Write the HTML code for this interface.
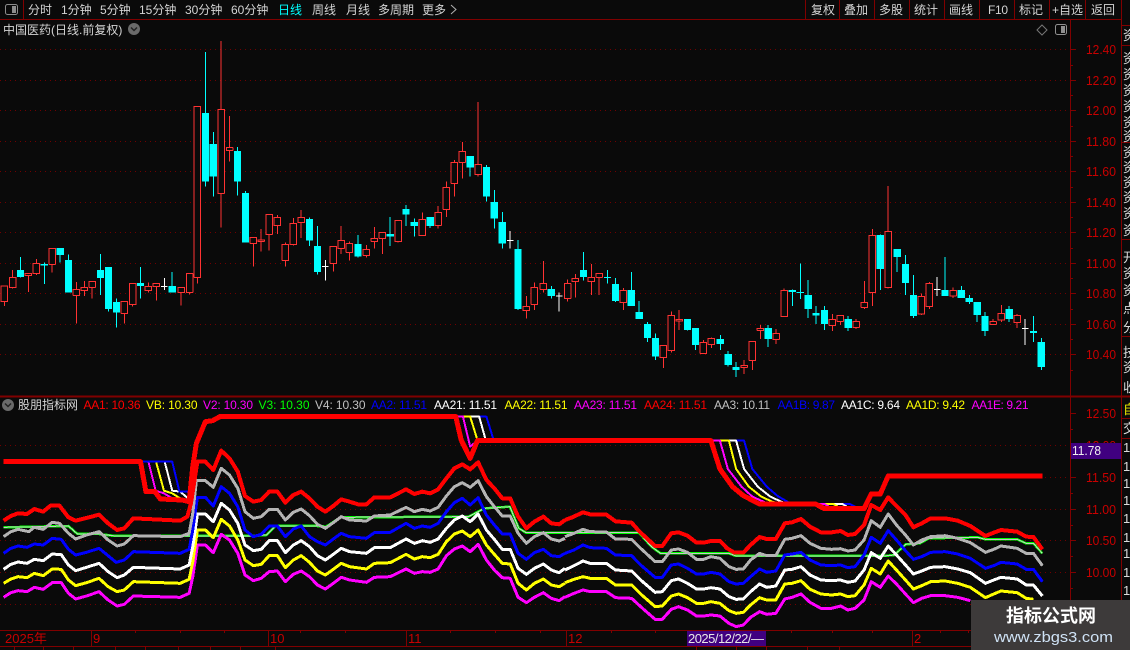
<!DOCTYPE html>
<html><head><meta charset="utf-8"><style>
html,body{margin:0;padding:0;width:1130px;height:650px;overflow:hidden;background:#0a0a0a}
svg{display:block}
text{font-family:"Liberation Sans","WenQuanYi Zen Hei","Noto Sans CJK SC",sans-serif;font-size:12px}
.t{fill:#d4d4d4}
.ax{fill:#c80000;font-size:13px}
.n{vector-effect:non-scaling-stroke;fill:none;shape-rendering:crispEdges;stroke-linejoin:round}
.s{fill:#dcdcdc;font-size:13px}
</style></head><body>
<svg width="1130" height="650" viewBox="0 0 1130 650" xmlns="http://www.w3.org/2000/svg">
<rect width="1130" height="650" fill="#0a0a0a"/>

<!-- grids -->
<g stroke="#700000" stroke-width="1" stroke-dasharray="1 4" shape-rendering="crispEdges">
<path d="M0 49.5H1068M0 80.5H1068M0 110.5H1068M0 141.5H1068M0 171.5H1068M0 202.5H1068M0 232.5H1068M0 263.5H1068M0 293.5H1068M0 324.5H1068M0 354.5H1068"/>
<path d="M0 445.5H1068M0 477.5H1068M0 509.5H1068M0 540.5H1068M0 572.5H1068M0 604.5H1068"/>
</g>

<!-- candles left half -->
<g transform="scale(.3603,.33333)">
<path class="n" stroke="#ff3232" stroke-width="1" d="M12 858V918M35 810V866M79 820V876M101 777V825M145 745V818M212 846V971M234 843V888M256 843V896M345 903V971M368 850V920M412 847V878M434 850V902M503 862V917M526 820V884M548 319V851M614 123V683M637 348V485M703 712V800M725 687V755M747 643V752M770 645V702M792 727V800M814 654V736M836 630V714M925 738V815M947 678V762M970 724V782M1017 735V773M1039 681V746M1061 697V762M1105 660V728M1172 637V708M1216 618V686M1239 544V651M1261 480V590M1283 426V536M1327 306V530M1461 888V956M1483 847V930M1508 783V878"/>
<path class="n" stroke="#ff3232" stroke-width="1" style="fill:#0a0a0a" d="M3 858h18v47h-18zM26 832h18v31h-18zM70 820h18v7h-18zM92 790h18v31h-18zM136 745h18v48h-18zM203 868h18v18h-18zM225 862h18v10h-18zM247 844h18v18h-18zM336 904h18v36h-18zM359 850h18v64h-18zM403 859h18v13h-18zM425 850h18v10h-18zM494 862h18v16h-18zM517 820h18v58h-18zM539 319h18v513h-18zM605 328h18v252h-18zM628 442h18v10h-18zM694 712h18v18h-18zM716 720h18v4h-18zM738 643h18v60h-18zM761 652h18v25h-18zM783 733h18v48h-18zM805 670h18v64h-18zM827 652h18v16h-18zM916 739h18v51h-18zM938 721h18v24h-18zM961 730h18v28h-18zM1008 748h18v18h-18zM1030 715h18v9h-18zM1052 697h18v18h-18zM1096 661h18v64h-18zM1163 658h18v49h-18zM1207 637h18v39h-18zM1230 562h18v66h-18zM1252 487h18v63h-18zM1274 454h18v33h-18zM1318 493h18v31h-18zM1452 919h18v13h-18zM1474 862h18v51h-18zM1499 850h18v18h-18z"/>
<path class="n" stroke="#00ffff" stroke-width="1" d="M57 771V833M123 788V852M167 744V788M190 763V878M279 762V885M301 801V935M323 895V983M390 801V896M478 816V878M570 156V560M592 396V590M659 441V587M681 573V728M859 652V738M881 678V824M994 705V773M1083 651V738M1127 615V678M1150 656V710M1194 651V684M1305 468V530M1350 495V605M1372 570V686M1394 636V746M1438 720V930M1530 858V896"/>
<path fill="#00ffff" shape-rendering="crispEdges" d="M47 810h20v21h-20zM113 792h20v5h-20zM157 744h20v21h-20zM180 780h20v98h-20zM269 810h20v24h-20zM291 801h20v126h-20zM313 906h20v32h-20zM380 849h20v9h-20zM468 858h20v20h-20zM560 339h20v206h-20zM582 432h20v98h-20zM649 453h20v92h-20zM671 579h20v149h-20zM849 657h20v65h-20zM871 738h20v78h-20zM984 732h20v38h-20zM1073 702h20v8h-20zM1117 627h20v17h-20zM1140 666h20v12h-20zM1184 651h20v27h-20zM1295 468h20v35h-20zM1340 501h20v89h-20zM1362 606h20v50h-20zM1384 666h20v65h-20zM1428 747h20v180h-20zM1520 867h20v21h-20z"/>
<path class="n" stroke="#ffffff" stroke-width="1" d="M456 834V870M447 859H465M903 780V842M894 799H912M1416 693V746M1407 721H1425M1552 878V935M1543 888H1561"/>
</g>
<!-- candles right half -->
<g transform="translate(565,0) scale(.3603,.33333)">
<path class="n" stroke="#ff3232" stroke-width="1" d="M7 838V905M29 822V893M73 792V885M95 820V885M162 864V930M273 1036V1104M295 934V1058M317 930V990M384 1020V1062M406 1012V1044M497 1080V1122M520 1024V1110M542 975V1017M586 987V1032M608 865V950M742 942V993M764 945V975M808 957V987M831 843V927M853 687V918M897 558V866M989 880V945M1011 846V927M1077 862V894M1188 957V975M1211 915V966M1255 942V984"/>
<path class="n" stroke="#ff3232" stroke-width="1" style="fill:#0a0a0a" d="M-2 850h18v46h-18zM20 835h18v10h-18zM64 832h18v13h-18zM86 820h18v12h-18zM153 871h18v37h-18zM264 1036h18v37h-18zM286 946h18v106h-18zM308 958h18v5h-18zM375 1027h18v33h-18zM397 1015h18v18h-18zM488 1096h18v6h-18zM511 1024h18v57h-18zM533 985h18v6h-18zM577 1000h18v18h-18zM599 871h18v79h-18zM733 958h18v18h-18zM755 946h18v18h-18zM799 964h18v18h-18zM822 907h18v15h-18zM844 706h18v172h-18zM888 694h18v169h-18zM980 889h18v53h-18zM1002 850h18v70h-18zM1068 871h18v17h-18zM1179 964h18v10h-18zM1202 940h18v20h-18zM1246 946h18v22h-18z"/>
<path class="n" stroke="#00ffff" stroke-width="1" d="M51 756V842M118 810V850M140 834V906M184 816V918M206 903V957M229 966V1026M251 1000V1080M340 957V992M362 984V1050M431 1005V1050M453 1053V1100M475 1086V1131M564 975V1041M631 868V918M653 790V897M675 840V954M697 918V972M720 918V990M786 948V993M875 703V870M922 747V816M945 765V885M967 825V954M1055 771V888M1100 858V894M1122 885V912M1144 906V966M1166 936V1008M1233 918V966M1300 948V1026M1322 1014V1110"/>
<path fill="#00ffff" shape-rendering="crispEdges" d="M41 810h20v21h-20zM108 831h20v3h-20zM130 852h20v51h-20zM174 870h20v48h-20zM196 936h20v21h-20zM219 972h20v42h-20zM241 1014h20v56h-20zM330 957h20v33h-20zM352 984h20v51h-20zM421 1017h20v15h-20zM443 1062h20v33h-20zM465 1101h20v9h-20zM554 984h20v33h-20zM621 870h20v6h-20zM643 876h20v3h-20zM665 885h20v42h-20zM687 939h20v8h-20zM710 930h20v42h-20zM776 957h20v27h-20zM865 705h20v102h-20zM912 747h20v24h-20zM935 792h20v57h-20zM957 885h20v63h-20zM1045 870h20v18h-20zM1090 870h20v24h-20zM1112 894h20v12h-20zM1134 906h20v39h-20zM1156 948h20v45h-20zM1223 927h20v30h-20zM1290 993h20v6h-20zM1312 1026h20v75h-20z"/>
<path class="n" stroke="#ffffff" stroke-width="1" d="M1033 831V888M1024 869H1042M1277 957V1035M1268 986H1286"/>
</g>

<!-- indicator lines left -->
<g transform="translate(0,390) scale(.3603,.33333)">
<polyline class="n" stroke="#00ff00" stroke-width="2.5" points="10,412 190,408 215,432 275,432 320,438 530,438 700,438 740,435 765,408 880,408 905,410 945,382 1300,380 1345,355 1415,350 1440,415 1460,428 1568,428"/>
<polyline class="n" stroke="#c8c8c8" stroke-width="1" points="10,412 190,408 215,432 275,432 320,438 530,438 700,438 740,435 765,408 880,408 905,410 945,382 1300,380 1345,355 1415,350 1440,415 1460,428 1568,428"/>
<polyline class="n" stroke="#ff00ff" stroke-width="2" points="390,215 412,215 432,302 455,310 478,325"/>
<polyline class="n" stroke="#ffff00" stroke-width="2" points="390,215 433,215 455,302 478,310 500,325"/>
<polyline class="n" stroke="#ffffff" stroke-width="2" points="390,215 457,215 478,302 500,305 522,325"/>
<polyline class="n" stroke="#0000ff" stroke-width="2" points="390,215 478,215 498,305 522,305 525,325"/>
<polyline class="n" stroke="#0000ff" stroke-width="2" points="1265,80 1350,80 1370,150"/>
<polyline class="n" stroke="#ffffff" stroke-width="2" points="1265,80 1330,80 1348,150"/>
<polyline class="n" stroke="#ffff00" stroke-width="2" points="1265,80 1305,80 1325,150"/>
<polyline class="n" stroke="#ff00ff" stroke-width="2" points="1265,80 1285,80 1305,170 1325,152"/>
<polyline class="n" stroke="#ff00ff" stroke-width="3" points="10,622 30,608 50,602 75,605 95,592 120,598 145,578 170,578 190,610 210,627 240,618 275,605 300,630 325,648 345,643 370,618 500,622 525,610 535,560 548,465 570,465 592,488 614,433 637,450 660,490 680,555 703,572 725,565 747,545 770,543 792,575 814,553 836,543 859,560 881,585 903,597 925,580 947,562 970,570 1017,577 1039,562 1083,560 1127,537 1150,550 1172,545 1194,547 1216,537 1239,497 1261,477 1283,468 1305,485 1327,463 1350,510 1372,540 1394,563 1416,565 1438,622 1461,638 1483,622 1508,608 1530,625 1552,632 1568,620"/>
<polyline class="n" stroke="#ffff00" stroke-width="3" points="10,580 30,567 50,560 75,563 95,550 120,557 145,537 170,538 190,570 210,587 240,578 275,565 300,590 325,605 345,600 370,575 500,580 525,568 535,515 548,420 570,420 592,443 614,388 637,408 660,450 680,510 703,527 725,523 747,497 770,497 792,533 814,510 836,497 859,517 881,543 903,555 925,538 947,520 970,530 1017,537 1039,520 1083,518 1127,493 1150,507 1172,500 1194,503 1216,493 1239,455 1261,432 1283,423 1305,440 1327,420 1350,465 1372,493 1394,520 1416,522 1438,580 1461,600 1483,580 1508,567 1530,585 1552,590 1568,580"/>
<polyline class="n" stroke="#ffffff" stroke-width="3" points="10,538 30,523 50,516 75,520 95,508 120,512 145,492 170,494 190,525 210,542 240,532 275,520 300,545 325,563 345,555 370,532 500,537 525,525 535,470 548,372 570,372 592,395 614,340 637,360 660,400 680,465 703,482 725,478 747,452 770,452 792,488 814,465 836,452 859,470 881,497 903,510 925,493 947,475 970,485 1017,490 1039,473 1083,473 1127,447 1150,460 1172,452 1194,457 1216,447 1239,415 1261,390 1283,378 1305,395 1327,372 1350,420 1372,448 1394,478 1416,478 1438,535 1461,553 1483,535 1508,522 1530,540 1552,548 1568,535"/>
<polyline class="n" stroke="#0000ff" stroke-width="3" points="10,490 30,475 50,468 75,472 95,462 120,465 145,445 170,448 190,478 210,495 240,487 275,475 300,497 322,517 345,510 370,485 500,490 525,478 535,420 548,322 570,322 592,348 614,290 637,310 660,350 680,420 703,440 725,433 747,408 770,408 792,440 814,417 836,408 859,440 881,455 903,465 925,447 947,430 970,440 1017,445 1039,428 1083,427 1127,400 1150,415 1172,408 1194,412 1216,400 1239,365 1261,338 1283,325 1305,345 1327,323 1350,375 1372,405 1394,432 1416,432 1438,490 1461,508 1483,488 1508,478 1530,497 1552,500 1568,490"/>
<polyline class="n" stroke="#b4b4b4" stroke-width="3" points="10,440 30,425 50,418 80,425 95,412 120,418 145,397 165,400 190,430 210,447 240,435 275,425 300,450 325,468 345,462 370,437 500,440 525,430 535,370 545,272 570,272 592,292 614,235 637,255 660,295 680,365 703,385 725,380 747,358 770,358 792,390 814,367 836,357 859,377 881,403 903,415 925,398 947,380 970,390 1017,393 1039,378 1083,375 1127,352 1150,365 1172,358 1194,363 1216,352 1239,318 1261,290 1283,278 1305,292 1327,272 1350,320 1372,350 1394,378 1416,378 1438,430 1461,460 1483,440 1508,428 1530,447 1552,453 1568,445"/>
<polyline class="n" stroke="#ff0000" stroke-width="4" points="10,392 30,378 50,370 75,372 95,357 120,365 140,347 165,347 190,382 210,392 240,384 275,374 300,400 325,420 345,415 370,385 500,392 520,380 530,340 545,235 548,215 570,215 592,240 614,182 637,205 660,245 680,318 703,335 725,330 747,305 770,305 792,338 814,315 836,305 859,325 881,350 903,365 925,348 947,328 970,335 994,343 1017,343 1039,322 1083,322 1127,298 1150,312 1172,305 1194,310 1216,298 1239,265 1261,235 1283,223 1305,238 1327,217 1350,270 1372,295 1394,325 1416,325 1438,380 1461,415 1483,395 1508,380 1530,400 1552,403 1568,390"/>
<polyline class="n" stroke="#ff0000" stroke-width="5" points="10,215 390,215 405,305 430,305 445,327 505,330 525,335 535,230 545,160 570,95 590,92 610,80 1265,80 1280,150 1305,205 1325,152 1568,152"/>
</g>
<!-- indicator lines right -->
<g transform="translate(565,390) scale(.3603,.33333)">
<polyline class="n" stroke="#00ff00" stroke-width="2.5" points="0,428 205,428 240,470 265,490 455,490 475,498 885,498 915,495 945,463 985,460 1010,445 1145,442 1167,448 1255,448 1280,460 1300,460 1325,490"/>
<polyline class="n" stroke="#c8c8c8" stroke-width="1" points="0,428 205,428 240,470 265,490 455,490 475,498 885,498 915,495 945,463 985,460 1010,445 1145,442 1167,448 1255,448 1280,460 1300,460 1325,490"/>
<polyline class="n" stroke="#0000ff" stroke-width="2" points="405,152 497,152 520,237 560,290 590,318 622,338"/>
<polyline class="n" stroke="#ffffff" stroke-width="2" points="405,152 475,152 497,237 535,290 570,320 600,335 620,342"/>
<polyline class="n" stroke="#ffff00" stroke-width="2" points="405,152 455,152 475,237 510,290 545,320 575,335 600,342"/>
<polyline class="n" stroke="#ff00ff" stroke-width="2" points="405,152 430,152 452,237 490,290 520,320 555,337 580,342"/>
<polyline class="n" stroke="#0000ff" stroke-width="2" points="695,342 790,342 805,350"/>
<polyline class="n" stroke="#ffffff" stroke-width="2" points="695,342 770,342 785,352"/>
<polyline class="n" stroke="#ffff00" stroke-width="2" points="695,342 745,342 760,352"/>
<polyline class="n" stroke="#ff00ff" stroke-width="2" points="695,342 720,342 735,352"/>
<polyline class="n" stroke="#ff00ff" stroke-width="3" points="0,622 25,610 50,600 70,605 115,605 140,623 185,625 210,650 250,688 270,688 295,658 315,650 340,660 365,678 385,678 405,675 430,678 455,700 475,710 495,705 515,682 540,665 560,673 585,670 610,627 630,622 655,612 680,637 710,655 740,655 765,648 785,660 805,655 830,630 850,575 875,592 897,558 920,582 945,612 967,638 990,625 1015,617 1055,617 1090,622 1125,632"/>
<polyline class="n" stroke="#ffff00" stroke-width="3" points="0,578 25,568 50,560 70,565 115,565 140,585 185,585 210,612 250,650 270,648 295,618 315,612 340,623 365,640 385,640 405,635 430,640 455,662 475,670 495,667 515,645 540,623 560,630 585,630 610,582 630,580 655,572 680,598 710,612 740,615 765,612 785,620 805,617 830,585 850,535 875,552 897,513 920,540 945,570 967,597 990,587 1015,575 1055,573 1090,580 1125,592 1167,623 1190,612 1210,603 1255,608 1280,625 1300,628"/>
<polyline class="n" stroke="#ffffff" stroke-width="3" points="0,540 25,527 50,513 70,520 115,520 140,540 185,543 210,570 250,607 270,605 295,572 315,567 340,580 365,597 385,597 405,593 430,597 455,620 475,628 495,627 515,605 540,582 560,592 585,588 610,540 630,538 655,530 680,555 710,570 740,572 765,570 785,577 805,573 830,540 850,488 875,505 897,468 920,495 945,525 967,552 990,543 1015,532 1055,530 1090,537 1125,548 1167,580 1190,570 1210,562 1255,567 1280,585 1300,585 1325,618"/>
<polyline class="n" stroke="#0000ff" stroke-width="3" points="0,490 25,480 50,465 70,473 115,475 140,495 185,497 210,525 250,562 270,562 295,525 315,522 340,535 365,552 385,552 405,547 430,552 455,575 475,582 495,580 515,560 540,537 560,547 585,543 610,495 630,492 655,487 680,510 710,525 740,527 765,525 785,533 805,530 830,495 850,442 875,460 897,422 920,450 945,482 967,508 990,500 1015,487 1055,485 1090,492 1125,505 1167,535 1190,527 1210,517 1255,522 1280,538 1300,538 1325,575"/>
<polyline class="n" stroke="#b4b4b4" stroke-width="3" points="0,440 25,430 50,418 70,425 115,426 140,447 185,448 210,475 250,515 270,515 295,480 315,477 340,487 365,508 385,508 405,500 430,505 455,530 475,538 495,537 515,510 540,490 560,497 585,497 610,448 630,445 655,437 680,460 710,475 740,478 765,476 785,483 805,480 830,450 850,392 875,412 897,372 920,405 945,435 967,465 990,450 1015,440 1055,437 1090,445 1125,458 1167,487 1190,478 1210,468 1255,475 1280,490 1300,490 1325,527"/>
<polyline class="n" stroke="#ff0000" stroke-width="4" points="0,390 20,382 50,367 70,373 115,374 140,394 185,398 205,423 250,468 270,468 295,430 315,427 340,437 365,458 385,458 405,453 430,453 450,475 470,488 495,488 515,465 540,441 560,447 585,447 610,400 630,397 655,387 680,410 710,427 740,427 765,423 785,435 805,432 830,405 850,345 875,360 897,322 920,348 945,375 967,412 990,400 1015,385 1055,385 1090,392 1125,408 1167,438 1190,428 1210,420 1255,425 1280,440 1300,441 1325,478"/>
<polyline class="n" stroke="#ff0000" stroke-width="5" points="0,152 405,152 430,237 465,290 495,317 540,342 695,342 720,356 830,356 850,312 875,312 897,258 1325,258"/>
</g>

<!-- structure lines -->
<g stroke="#800000" fill="none" shape-rendering="crispEdges">
<path d="M0 19.5H1121" stroke-width="1"/>
<path d="M23.5 0V19M805.5 0V19M839.5 0V19M874.5 0V19M909.5 0V19M944.5 0V19M979.5 0V19M1014.5 0V19M1049.5 0V19M1085.5 0V19M1121.5 0V650" stroke-width="1"/>
<path d="M1070.5 19V650" stroke-width="1"/>
<path d="M0 396.5H1130" stroke-width="2"/>
<path d="M0 630.5H1121M0 646.5H1121" stroke-width="1"/>
<path d="M1122 25.5H1130M1122 45.5H1130M1122 142.5H1130M1122 239.5H1130M1122 336.5H1130M1122 418.5H1130M1122 438.5H1130"/>
<path d="M1070 49.5H1076M1070 80.5H1076M1070 110.5H1076M1070 141.5H1076M1070 171.5H1076M1070 202.5H1076M1070 232.5H1076M1070 263.5H1076M1070 293.5H1076M1070 324.5H1076M1070 354.5H1076M1070 65.5H1073M1070 95.5H1073M1070 126.5H1073M1070 156.5H1073M1070 187.5H1073M1070 217.5H1073M1070 248.5H1073M1070 278.5H1073M1070 309.5H1073M1070 339.5H1073M1070 370.5H1073"/>
<path d="M1070 413.5H1076M1070 477.5H1076M1070 509.5H1076M1070 540.5H1076M1070 572.5H1076M1070 604.5H1076M1070 429.5H1073M1070 493.5H1073M1070 525.5H1073M1070 556.5H1073M1070 588.5H1073M1070 620.5H1073"/>
<path d="M91.5 631V646M268.5 631V646M406.5 631V646M566.5 631V646M912.5 631V646M135.5 631V633M180.5 631V633M224.5 631V633M300.5 631V633M345.5 631V633M450.5 631V633M495.5 631V633M540.5 631V633M611.5 631V633M655.5 631V633M791.5 631V633M832.5 631V633M872.5 631V633M940.5 631V633M968.5 631V633"/>
<path d="M14.5 647V650M43.5 647V650M73.5 647V650M115.5 647V650M145.5 647V650M178.5 647V650M210.5 647V650M240.5 647V650M275.5 647V650M696.5 647V650M736.5 647V650M766.5 647V650M807.5 647V650M839.5 647V650"/>
</g>

<!-- toolbar -->
<g class="t">
<rect x="5.5" y="4.5" width="12" height="10" rx="2" fill="none" stroke="#8c8c8c"/><rect x="12" y="6" width="4" height="7" fill="#8c8c8c"/>
<text class="t" x="28" y="14">分时</text>
<text class="t" x="61" y="14">1分钟</text>
<text class="t" x="100" y="14">5分钟</text>
<text class="t" x="139" y="14">15分钟</text>
<text class="t" x="185" y="14">30分钟</text>
<text class="t" x="231" y="14">60分钟</text>
<text x="278" y="14" fill="#00ffff">日线</text>
<text class="t" x="312" y="14">周线</text>
<text class="t" x="346" y="14">月线</text>
<text class="t" x="378" y="14">多周期</text>
<text class="t" x="422" y="14">更多</text>
<path d="M451 5l5 4.500-5 4.500" fill="none" stroke="#b0b0b0"/>
<text class="t" x="811" y="14">复权</text>
<text class="t" x="844" y="14">叠加</text>
<text class="t" x="879" y="14">多股</text>
<text class="t" x="914" y="14">统计</text>
<text class="t" x="949" y="14">画线</text>
<text class="t" x="988" y="14" textLength="20">F10</text>
<text class="t" x="1019" y="14">标记</text>
<text class="t" x="1052" y="14">+自选</text>
<text class="t" x="1091" y="14">返回</text>
</g>

<!-- title -->
<text class="t" x="3" y="34">中国医药(日线.前复权)</text>
<circle cx="134" cy="29" r="6" fill="#6a6a6a"/><path d="M131 27.500l3 3 3-3" fill="none" stroke="#222" stroke-width="1.500"/>
<path d="M1042 25l5 5-5 5-5-5z" fill="none" stroke="#777"/>
<rect x="1055.500" y="24.500" width="11" height="10" rx="2" fill="none" stroke="#909090"/><rect x="1061" y="26" width="4" height="7" fill="#909090"/>

<!-- upper axis -->
<g>
<text class="ax" x="1086" y="54" textLength="30" lengthAdjust="spacingAndGlyphs">12.40</text>
<text class="ax" x="1086" y="85" textLength="30" lengthAdjust="spacingAndGlyphs">12.20</text>
<text class="ax" x="1086" y="115" textLength="30" lengthAdjust="spacingAndGlyphs">12.00</text>
<text class="ax" x="1086" y="146" textLength="30" lengthAdjust="spacingAndGlyphs">11.80</text>
<text class="ax" x="1086" y="176" textLength="30" lengthAdjust="spacingAndGlyphs">11.60</text>
<text class="ax" x="1086" y="207" textLength="30" lengthAdjust="spacingAndGlyphs">11.40</text>
<text class="ax" x="1086" y="237" textLength="30" lengthAdjust="spacingAndGlyphs">11.20</text>
<text class="ax" x="1086" y="268" textLength="30" lengthAdjust="spacingAndGlyphs">11.00</text>
<text class="ax" x="1086" y="298" textLength="30" lengthAdjust="spacingAndGlyphs">10.80</text>
<text class="ax" x="1086" y="329" textLength="30" lengthAdjust="spacingAndGlyphs">10.60</text>
<text class="ax" x="1086" y="359" textLength="30" lengthAdjust="spacingAndGlyphs">10.40</text>
<text class="ax" x="1086" y="418" textLength="30" lengthAdjust="spacingAndGlyphs">12.50</text>
<text class="ax" x="1086" y="450" textLength="30" lengthAdjust="spacingAndGlyphs">12.00</text>
<text class="ax" x="1086" y="482" textLength="30" lengthAdjust="spacingAndGlyphs">11.50</text>
<text class="ax" x="1086" y="514" textLength="30" lengthAdjust="spacingAndGlyphs">11.00</text>
<text class="ax" x="1086" y="545" textLength="30" lengthAdjust="spacingAndGlyphs">10.50</text>
<text class="ax" x="1086" y="577" textLength="30" lengthAdjust="spacingAndGlyphs">10.00</text>
</g>
<rect x="1071" y="443" width="50" height="16" fill="#400080"/>
<text x="1072" y="455" fill="#f0f0f0" style="font-size:13px" textLength="29" lengthAdjust="spacingAndGlyphs">11.78</text>

<!-- legend -->
<circle cx="8" cy="405" r="6" fill="#6a6a6a"/><path d="M5 403.500l3 3 3-3" fill="none" stroke="#222" stroke-width="1.500"/>
<text class="t" x="18" y="409">股朋指标网</text>
<g>
<text x="83.500" y="409" fill="#ff0000" textLength="57" lengthAdjust="spacing">AA1: 10.36</text>
<text x="146" y="409" fill="#ffff00" textLength="51.500">VB: 10.30</text>
<text x="203" y="409" fill="#ff00ff" textLength="50">V2: 10.30</text>
<text x="258.500" y="409" fill="#00ff00" textLength="51">V3: 10.30</text>
<text x="315" y="409" fill="#c0c0c0" textLength="50.500">V4: 10.30</text>
<text x="371" y="409" fill="#0000ff" textLength="56">AA2: 11.51</text>
<text x="434" y="409" fill="#ffffff" textLength="63">AA21: 11.51</text>
<text x="504.500" y="409" fill="#ffff00" textLength="63">AA22: 11.51</text>
<text x="574" y="409" fill="#ff00ff" textLength="63">AA23: 11.51</text>
<text x="644" y="409" fill="#ff0000" textLength="63">AA24: 11.51</text>
<text x="714" y="409" fill="#c0c0c0" textLength="56">AA3: 10.11</text>
<text x="777.500" y="409" fill="#0000ff" textLength="57.500">AA1B: 9.87</text>
<text x="841" y="409" fill="#ffffff" textLength="59">AA1C: 9.64</text>
<text x="906" y="409" fill="#ffff00" textLength="59">AA1D: 9.42</text>
<text x="971.500" y="409" fill="#ff00ff" textLength="57">AA1E: 9.21</text>
</g>

<!-- time axis -->
<text x="5" y="643" fill="#c80000" style="font-size:13px">2025年</text>
<text x="93" y="643" fill="#c80000" style="font-size:13px">9</text>
<text x="270" y="643" fill="#c80000" style="font-size:13px">10</text>
<text x="408" y="643" fill="#c80000" style="font-size:13px">11</text>
<text x="568" y="643" fill="#c80000" style="font-size:13px">12</text>
<text x="914" y="643" fill="#c80000" style="font-size:13px">2</text>
<rect x="687" y="631" width="79" height="15" fill="#400080"/>
<text x="688" y="643" fill="#e8e8e8" style="font-size:13px" textLength="76">2025/12/22/—</text>

<!-- right strip -->
<g>
<text class="s" x="1123" y="40">资</text>
<text class="s" x="1123" y="63">资</text><text class="s" x="1123" y="79">资</text><text class="s" x="1123" y="95">资</text><text class="s" x="1123" y="111">资</text><text class="s" x="1123" y="127">资</text><text class="s" x="1123" y="141">资</text>
<text class="s" x="1123" y="157">资</text><text class="s" x="1123" y="172">资</text><text class="s" x="1123" y="187">资</text><text class="s" x="1123" y="202">资</text><text class="s" x="1123" y="218">资</text><text class="s" x="1123" y="235">资</text>
<text class="s" x="1123" y="262">开</text><text class="s" x="1123" y="278">资</text><text class="s" x="1123" y="295">资</text><text class="s" x="1123" y="313">点</text><text class="s" x="1123" y="332">分</text>
<text class="s" x="1123" y="357">技</text><text class="s" x="1123" y="372">资</text><text class="s" x="1123" y="392">收</text>
<text x="1123" y="414" fill="#e8e800" style="font-size:13px">自</text>
<text class="s" x="1123" y="433">交</text>
<text class="s" x="1123" y="452">1</text><text class="s" x="1123" y="471">1</text><text class="s" x="1123" y="488">1</text><text class="s" x="1123" y="505">1</text><text class="s" x="1123" y="523">1</text><text class="s" x="1123" y="542">1</text><text class="s" x="1123" y="558">1</text><text class="s" x="1123" y="577">1</text><text class="s" x="1123" y="595">1</text>
</g>

<!-- watermark -->
<rect x="971" y="600" width="159" height="50" fill="#3d3a3a"/>
<text x="1006" y="622" fill="#ffffff" style="font-size:18px;font-weight:bold" textLength="90">指标公式网</text>
<text x="994" y="642" fill="#cfe2f5" style="font-size:15px" textLength="119" lengthAdjust="spacingAndGlyphs">www.zbgs3.com</text>
</svg>
</body></html>
